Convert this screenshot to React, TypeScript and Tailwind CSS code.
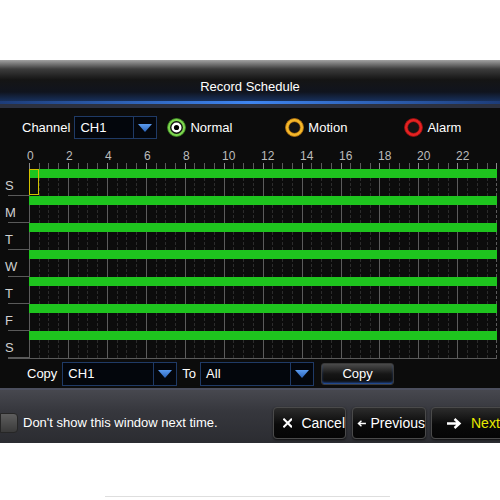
import React from "react";

const hours = [0, 2, 4, 6, 8, 10, 12, 14, 16, 18, 20, 22];
const days = ["S", "M", "T", "W", "T", "F", "S"];
const halves = Array.from({ length: 48 }, (_, i) => i);

function Arrow() {
  return (
    <div className="w-[23px] h-full border-l border-[#1f3a66] flex items-center justify-center">
      <svg width="14" height="8" viewBox="0 0 14 8">
        <defs>
          <linearGradient id="tri" x1="0" y1="0" x2="0" y2="1">
            <stop offset="0" stopColor="#5b9cf0" />
            <stop offset="1" stopColor="#2a62b8" />
          </linearGradient>
        </defs>
        <polygon points="0,0 14,0 7,8" fill="url(#tri)" />
      </svg>
    </div>
  );
}

function Dropdown({ value, width }: { value: string; width: string }) {
  return (
    <div className={`${width} h-full flex border border-[#1f3a66] bg-[#03060c]`}>
      <div className="flex-1 pl-[5px] flex items-center text-white text-[13px]">{value}</div>
      <Arrow />
    </div>
  );
}

function Radio({ kind }: { kind: "normal" | "motion" | "alarm" }) {
  if (kind === "normal") {
    return (
      <svg width="19" height="19" viewBox="0 0 19 19">
        <circle cx="9.5" cy="9.5" r="9" fill="#7ed650" stroke="#3f8f22" strokeWidth="0.8" />
        <circle cx="9.5" cy="9.5" r="6.4" fill="#111" />
        <circle cx="9.5" cy="9.5" r="5" fill="#fff" />
        <circle cx="9.5" cy="9.5" r="2.6" fill="#000" />
      </svg>
    );
  }
  const outer = kind === "motion" ? "#f4b82a" : "#e42222";
  const edge = kind === "motion" ? "#b87510" : "#9a1010";
  return (
    <svg width="19" height="19" viewBox="0 0 19 19">
      <circle cx="9.5" cy="9.5" r="9" fill={outer} stroke={edge} strokeWidth="0.8" />
      <circle cx="9.5" cy="9.5" r="5.8" fill="#141414" stroke={edge} strokeWidth="0.6" />
    </svg>
  );
}

function DayRow({ day, first }: { day: string; first: boolean }) {
  return (
    <div className="flex h-[27px]">
      <div className="w-[29px] flex flex-col">
        <div className="flex-1 pl-[5px] pt-[9px] text-[13px] leading-[15px] text-[#d0d0d0]">{day}</div>
        <div className="ml-[8px] h-px bg-[#5a5a5a]" />
      </div>
      <div className="relative w-[468px] flex flex-col">
        <div className="h-[9px] bg-[#1ec41e]" />
        <div className="flex-1 flex">
          {halves.map((i) => (
            <div
              key={i}
              className={
                i % 4 === 0
                  ? "flex-1 border-l border-solid border-[#5c5c5c]" + (i === 47 ? " border-r" : "")
                  : "flex-1 border-l border-dashed border-[#2c2c2c]" + (i === 47 ? " border-r border-r-solid border-r-[#5c5c5c]" : "")
              }
            />
          ))}
        </div>
        {first && <div className="absolute left-0 top-0 w-[10px] h-[26px] border border-[#d2c200]" />}
      </div>
    </div>
  );
}

function Btn({ children, className }: { children: React.ReactNode; className: string }) {
  return (
    <div
      className={`${className} h-[32px] shrink-0 flex items-center rounded-[4px] border border-[#4a4a4a] bg-[linear-gradient(to_bottom,#2c2c2c,#0a0a0a_55%,#050505)] shadow-[0_1px_2px_#111] text-white text-[14px]`}
    >
      {children}
    </div>
  );
}

export default function App() {
  return (
    <div className="w-[500px] h-[500px] overflow-hidden bg-white flex flex-col font-['Liberation_Sans',Arial,sans-serif]">
      <div className="h-[60px] shrink-0" />

      {/* title bar */}
      <div className="h-[41px] shrink-0 bg-[linear-gradient(to_bottom,#a2a2a2_0%,#3c3c3c_22%,#151515_48%,#10141e_78%,#17305c_100%)] pt-[19px] text-center text-white text-[13px] leading-[16px]">
        Record Schedule
      </div>
      <div className="h-[3px] shrink-0 bg-[linear-gradient(to_right,#1d3c78,#3f86f2_50%,#1d3c78)]" />
      <div className="h-[4px] shrink-0 bg-[#2c3140]" />

      {/* body */}
      <div className="h-[280px] shrink-0 bg-[#0c0c0c] flex flex-col pt-[8px] pb-[2px]">
        <div className="h-[23px] flex items-center">
          <span className="ml-[22px] text-white text-[13px]">Channel</span>
          <div className="ml-[4px] h-full">
            <Dropdown value="CH1" width="w-[83px]" />
          </div>
          <div className="ml-[10px] flex items-center gap-[4px]">
            <Radio kind="normal" />
            <span className="text-white text-[13px]">Normal</span>
          </div>
          <div className="ml-[53px] flex items-center gap-[4px]">
            <Radio kind="motion" />
            <span className="text-white text-[13px]">Motion</span>
          </div>
          <div className="ml-[57px] flex items-center gap-[4px]">
            <Radio kind="alarm" />
            <span className="text-white text-[13px]">Alarm</span>
          </div>
        </div>

        <div className="mt-[11px] ml-[29px] w-[468px] h-[13px] flex">
          {hours.map((h) => (
            <div key={h} className="flex-1">
              <span className="block -ml-[2px] text-[12px] leading-[13px] text-[#bdbdbd]">{h}</span>
            </div>
          ))}
        </div>
        <div className="ml-[29px] w-[468px] h-[6px] flex">
          {halves.map((i) => (
            <div
              key={i}
              className={
                (i % 4 === 0 ? "border-[#8a8a8a]" : "border-[#5a5a5a]") +
                " flex-1 border-l" +
                (i === 47 ? " border-r border-r-[#8a8a8a]" : "")
              }
            />
          ))}
        </div>

        {days.map((d, i) => (
          <DayRow key={i} day={d} first={i === 0} />
        ))}
        <div className="ml-[8px] w-[489px] h-px bg-[#5a5a5a]" />

        <div className="mt-[3px] h-[24px] flex items-center">
          <span className="ml-[27px] text-white text-[13px]">Copy</span>
          <div className="ml-[5px] h-full">
            <Dropdown value="CH1" width="w-[115px]" />
          </div>
          <span className="ml-[5px] text-white text-[13px]">To</span>
          <div className="ml-[4px] h-full">
            <Dropdown value="All" width="w-[114px]" />
          </div>
          <div className="ml-[7px] w-[73px] h-[22px] flex items-center justify-center rounded-[3px] border border-[#3a3a3a] bg-[linear-gradient(to_bottom,#4a4a4a,#161616_50%,#0a0a0a)] shadow-[inset_0_-2px_3px_-1px_#2f6ad4] text-white text-[13px]">
            Copy
          </div>
        </div>
      </div>

      <div className="h-[2px] shrink-0 bg-[#4c4f5e]" />

      {/* footer */}
      <div className="h-[53px] shrink-0 bg-[linear-gradient(to_bottom,#47484f,#36373d_40%,#2b2c31)] pt-[17px]">
        <div className="h-[32px] flex items-center">
          <div className="w-[273px] shrink-0 flex items-center">
            <div className="w-[18px] h-[20px] rounded-r-[4px] border border-[#262626] bg-[linear-gradient(to_bottom,#5e5e5e,#3a3a3a)]" />
            <span className="ml-[5px] text-white text-[13px]">Don't show this window next time.</span>
          </div>
          <Btn className="w-[73px] pl-[9px]">
            <svg width="12" height="12" viewBox="0 0 12 12">
              <path d="M1.5 1.5 L10.5 10.5 M10.5 1.5 L1.5 10.5" stroke="#fff" strokeWidth="2.8" strokeLinecap="square" />
            </svg>
            <span className="ml-[9px]">Cancel</span>
          </Btn>
          <Btn className="ml-[6px] w-[74px] pl-[4px]">
            <svg width="16" height="13" viewBox="0 0 16 13">
              <path d="M15 6.5 H3 M7.5 2 L2.5 6.5 L7.5 11" stroke="#fff" strokeWidth="2.4" fill="none" />
            </svg>
            <span className="ml-[4px]">Previous</span>
          </Btn>
          <Btn className="ml-[5px] w-[80px] pl-[14px]">
            <svg width="16" height="13" viewBox="0 0 16 13">
              <path d="M1 6.5 H13 M8.5 2 L13.5 6.5 L8.5 11" stroke="#fff" strokeWidth="2.4" fill="none" />
            </svg>
            <span className="ml-[9px] text-[#e8e800]">Next</span>
          </Btn>
        </div>
      </div>

      <div className="mt-[53px] ml-[105px] w-[285px] h-px shrink-0 bg-[#dedede]" />
    </div>
  );
}
